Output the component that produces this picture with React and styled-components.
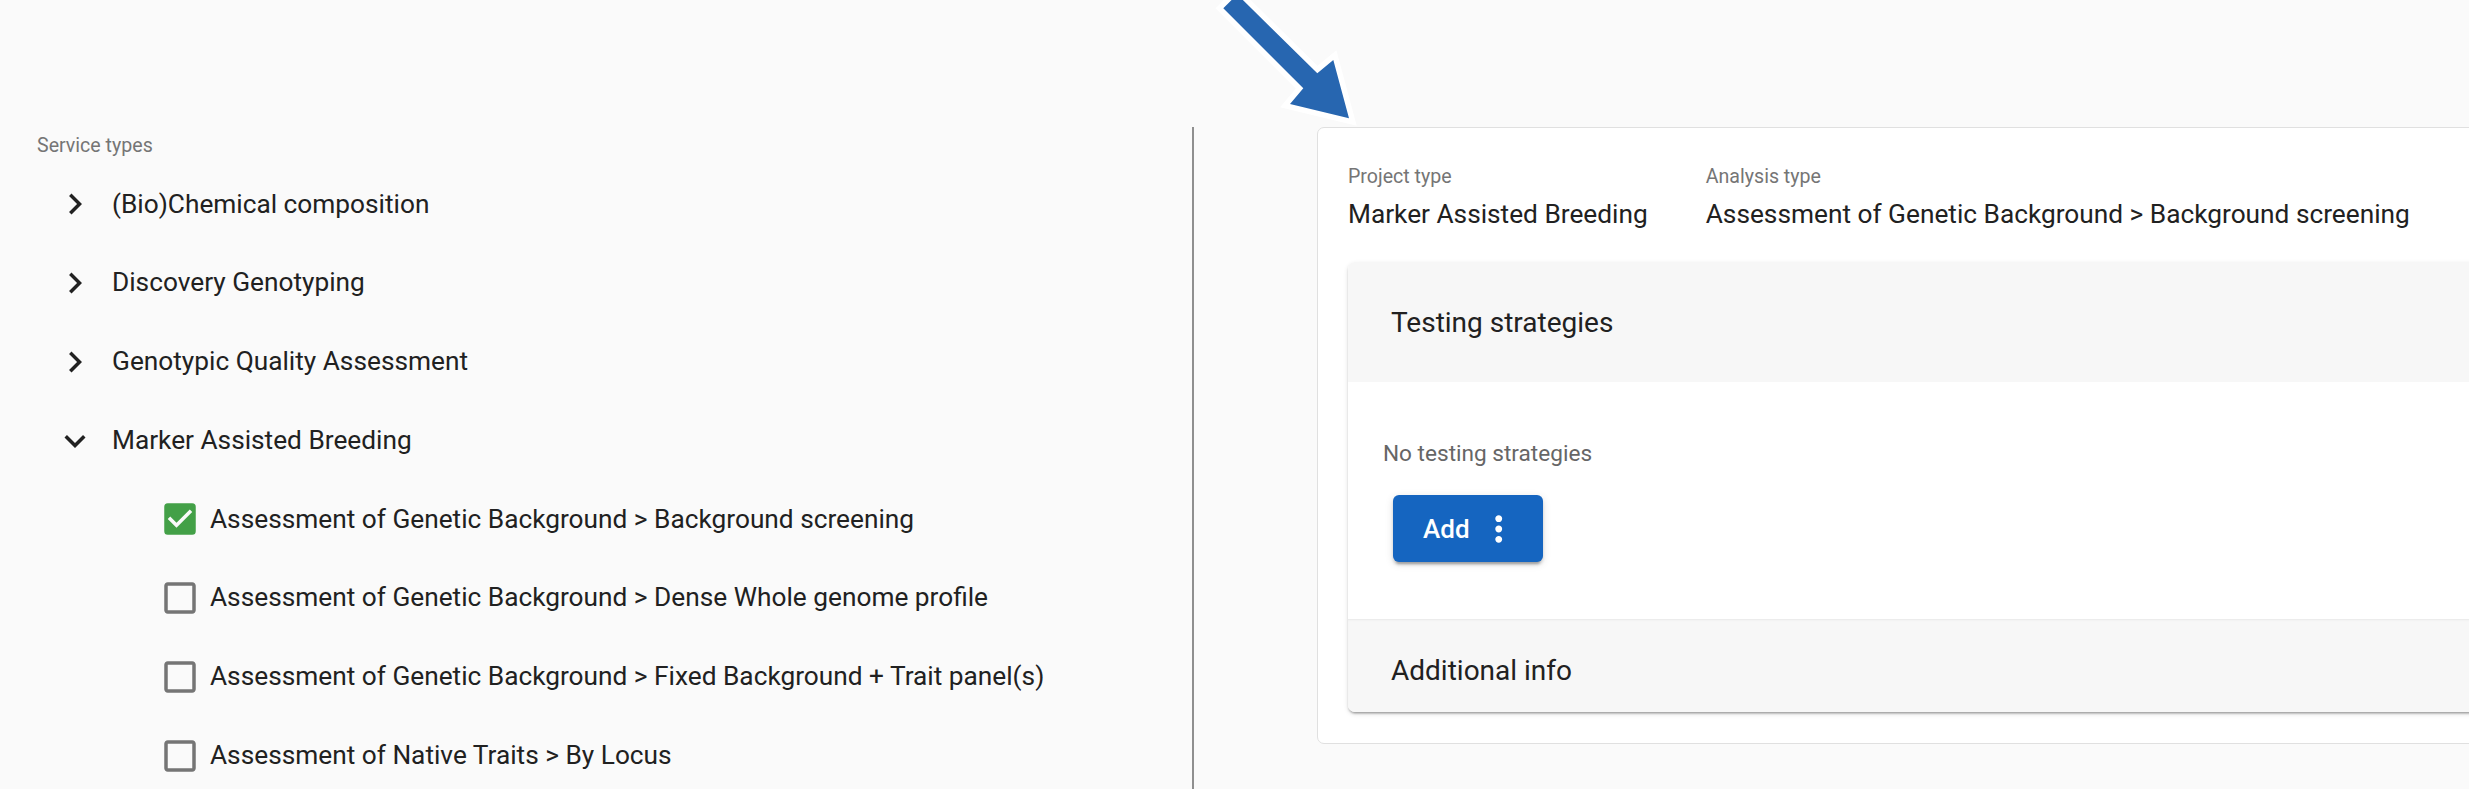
import React from "react";
import styled, { createGlobalStyle } from "styled-components";
import {
  MdCheckBox,
  MdCheckBoxOutlineBlank,
  MdChevronRight,
  MdExpandMore,
  MdMoreVert,
} from "react-icons/md";

const GlobalStyle = createGlobalStyle`
  html, body {
    margin: 0;
    padding: 0;
    background: #fafafa;
    font-family: Roboto, "Liberation Sans", Arial, sans-serif;
    color: #212121;
    overflow: hidden;
  }
`;

const services = [
  { name: "(Bio)Chemical composition", open: false },
  { name: "Discovery Genotyping", open: false },
  { name: "Genotypic Quality Assessment", open: false },
  {
    name: "Marker Assisted Breeding",
    open: true,
    children: [
      { name: "Assessment of Genetic Background > Background screening", checked: true },
      { name: "Assessment of Genetic Background > Dense Whole genome profile" },
      { name: "Assessment of Genetic Background > Fixed Background + Trait panel(s)" },
      { name: "Assessment of Native Traits > By Locus" },
    ],
  },
];

export default function App() {
  return (
    <>
      <GlobalStyle />
      <Page>
        <Columns>
          <LeftPane>
            <SectionLabel>Service types</SectionLabel>
            {services.map((s) => (
              <React.Fragment key={s.name}>
                <TreeRow>
                  <Toggle>{s.open ? <MdExpandMore /> : <MdChevronRight />}</Toggle>
                  <RowText>{s.name}</RowText>
                </TreeRow>
                {s.open &&
                  s.children.map((c) => (
                    <ChildRow key={c.name}>
                      <Check $checked={c.checked}>
                        {c.checked ? <MdCheckBox /> : <MdCheckBoxOutlineBlank />}
                      </Check>
                      <RowText>{c.name}</RowText>
                    </ChildRow>
                  ))}
              </React.Fragment>
            ))}
          </LeftPane>

          <RightPane>
            <Card>
              <Summary>
                <Field>
                  <FieldLabel>Project type</FieldLabel>
                  <FieldValue>Marker Assisted Breeding</FieldValue>
                </Field>
                <Field>
                  <FieldLabel>Analysis type</FieldLabel>
                  <FieldValue>Assessment of Genetic Background &gt; Background screening</FieldValue>
                </Field>
              </Summary>

              <Accordion>
                <AccordionHeader $h={120}>Testing strategies</AccordionHeader>
                <AccordionBody>
                  <EmptyText>No testing strategies</EmptyText>
                  <AddButton>
                    Add
                    <MdMoreVert />
                  </AddButton>
                </AccordionBody>
                <AccordionHeader $h={93} $divided>
                  Additional info
                </AccordionHeader>
              </Accordion>
            </Card>
          </RightPane>
        </Columns>

        <Arrow viewBox="0 0 2469 789" width="2469" height="789">
          <polygon
            points="1223.3,8.3 1237.2,-5.6 1317.3,73.3 1333.3,60 1349,118.3 1290,104 1303.3,88.3"
            fill="#2766b0"
            stroke="#ffffff"
            strokeWidth="11"
            strokeLinejoin="miter"
            paintOrder="stroke"
          />
        </Arrow>
      </Page>
    </>
  );
}

const Page = styled.div`
  position: relative;
  width: 2469px;
  height: 789px;
  overflow: hidden;
`;

const Columns = styled.div`
  display: flex;
  margin-top: 127px;
  height: 662px;
`;

const LeftPane = styled.div`
  width: 1155px;
  flex: none;
  padding-left: 37px;
  border-right: 2px solid #8f8f8f;
  display: flex;
  flex-direction: column;
`;

const SectionLabel = styled.div`
  font-size: 19.6px;
  line-height: 26px;
  color: #757575;
  padding-top: 6px;
  margin-bottom: 6px;
`;

const TreeRow = styled.div`
  display: flex;
  align-items: center;
  height: 78.75px;
  flex: none;
  padding-left: 17px;
`;

const ChildRow = styled(TreeRow)`
  padding-left: 122px;
`;

const Toggle = styled.span`
  display: flex;
  width: 42px;
  height: 42px;
  margin-right: 16px;
  color: #212121;
  svg {
    width: 42px;
    height: 42px;
  }
`;

const Check = styled.span`
  display: flex;
  width: 42px;
  height: 42px;
  margin-right: 9px;
  color: ${({ $checked }) => ($checked ? "#43a047" : "#757575")};
  svg {
    width: 42px;
    height: 42px;
  }
`;

const RowText = styled.span`
  font-size: 26.25px;
  line-height: 1.5;
  color: #212121;
  white-space: nowrap;
`;

const RightPane = styled.div`
  flex: 1;
  padding-left: 123px;
  min-width: 0;
`;

const Card = styled.div`
  width: calc(100% + 80px);
  background: #ffffff;
  border: 1.5px solid #e0e0e0;
  border-radius: 7px;
  padding: 31px 0 31px 30px;
  box-sizing: border-box;
`;

const Summary = styled.div`
  display: flex;
  gap: 58px;
  margin-bottom: 30px;
`;

const Field = styled.div`
  display: flex;
  flex-direction: column;
  gap: 3px;
`;

const FieldLabel = styled.div`
  font-size: 19.6px;
  line-height: 35px;
  color: #757575;
`;

const FieldValue = styled.div`
  font-size: 26.25px;
  line-height: 35px;
  color: #212121;
  white-space: nowrap;
`;

const Accordion = styled.div`
  border-radius: 7px 0 0 7px;
  overflow: hidden;
  box-shadow: 0 3px 2px -2px rgba(0, 0, 0, 0.2), 0 2px 2px 0 rgba(0, 0, 0, 0.14),
    0 2px 5px 0 rgba(0, 0, 0, 0.12);
`;

const AccordionHeader = styled.div`
  height: ${({ $h }) => $h}px;
  box-sizing: border-box;
  display: flex;
  align-items: center;
  padding-left: 43px;
  padding-top: ${({ $divided }) => ($divided ? "9px" : "0")};
  background: #f7f7f7;
  font-size: 28px;
  color: #212121;
  box-shadow: ${({ $divided }) =>
    $divided ? "inset 0 2px 3px -2px rgba(0,0,0,0.12)" : "none"};
`;

const AccordionBody = styled.div`
  height: 237px;
  box-sizing: border-box;
  padding: 54px 0 0 45px;
  background: #ffffff;
`;

const EmptyText = styled.div`
  font-size: 22.6px;
  line-height: 35px;
  color: #666666;
  margin: 0 0 24px -10px;
`;

const AddButton = styled.button`
  display: inline-flex;
  align-items: center;
  gap: 8px;
  height: 67px;
  width: 150px;
  box-sizing: border-box;
  padding: 0 24px 0 30px;
  border: none;
  border-radius: 6px;
  background: #1565c0;
  color: #ffffff;
  font-family: Roboto, "Liberation Sans", Arial, sans-serif;
  font-size: 26px;
  font-weight: 500;
  box-shadow: 0 5px 2px -3px rgba(0, 0, 0, 0.2), 0 3px 3px 0 rgba(0, 0, 0, 0.14),
    0 2px 9px 0 rgba(0, 0, 0, 0.12);
  svg {
    width: 42px;
    height: 42px;
  }
`;

const Arrow = styled.svg`
  position: absolute;
  left: 0;
  top: 0;
  pointer-events: none;
  overflow: visible;
`;
